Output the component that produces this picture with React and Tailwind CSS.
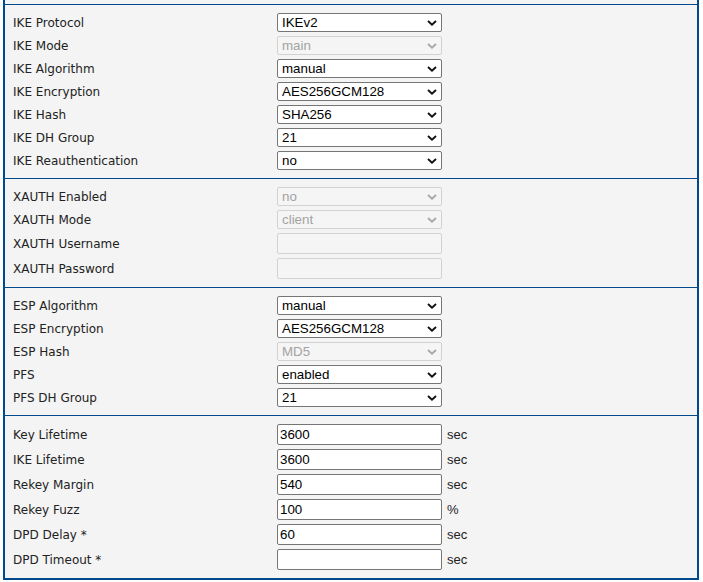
const sections = [
    [
        { label: 'IKE Protocol', type: 'select', value: 'IKEv2' },
        { label: 'IKE Mode', type: 'select', value: 'main', disabled: true },
        { label: 'IKE Algorithm', type: 'select', value: 'manual' },
        { label: 'IKE Encryption', type: 'select', value: 'AES256GCM128' },
        { label: 'IKE Hash', type: 'select', value: 'SHA256' },
        { label: 'IKE DH Group', type: 'select', value: '21' },
        { label: 'IKE Reauthentication', type: 'select', value: 'no' },
    ],
    [
        { label: 'XAUTH Enabled', type: 'select', value: 'no', disabled: true },
        { label: 'XAUTH Mode', type: 'select', value: 'client', disabled: true },
        { label: 'XAUTH Username', type: 'text', value: '', disabled: true },
        { label: 'XAUTH Password', type: 'text', value: '', disabled: true },
    ],
    [
        { label: 'ESP Algorithm', type: 'select', value: 'manual' },
        { label: 'ESP Encryption', type: 'select', value: 'AES256GCM128' },
        { label: 'ESP Hash', type: 'select', value: 'MD5', disabled: true },
        { label: 'PFS', type: 'select', value: 'enabled' },
        { label: 'PFS DH Group', type: 'select', value: '21' },
    ],
    [
        { label: 'Key Lifetime', type: 'text', value: '3600', unit: 'sec' },
        { label: 'IKE Lifetime', type: 'text', value: '3600', unit: 'sec' },
        { label: 'Rekey Margin', type: 'text', value: '540', unit: 'sec' },
        { label: 'Rekey Fuzz', type: 'text', value: '100', unit: '%' },
        { label: 'DPD Delay *', type: 'text', value: '60', unit: 'sec' },
        { label: 'DPD Timeout *', type: 'text', value: '', unit: 'sec' },
    ],
];

const ctrlFont = "font-['Liberation_Sans',Arial,sans-serif] text-[13.33px]";

function Chevron({ disabled }) {
    return (
        <svg
            width="10"
            height="6"
            viewBox="0 0 10 6"
            className="pointer-events-none absolute right-[5px] top-[7px]"
        >
            <path
                d="M1 1 L5 4.6 L9 1"
                fill="none"
                stroke={disabled ? '#a8a8a8' : '#111'}
                strokeWidth="1.9"
            />
        </svg>
    );
}

function Select({ value, disabled }) {
    return (
        <div className="relative h-[19px] w-[165px]">
            <select
                defaultValue={value}
                disabled={disabled}
                className={`block h-full w-full appearance-none rounded-[2px] border pl-[4px] leading-[17px] outline-none ${ctrlFont} ${
                    disabled
                        ? 'border-[#d2d2d2] bg-[#f5f5f5] text-[#a3a3a3]'
                        : 'border-[#767676] bg-white text-black'
                }`}
            >
                <option value={value}>{value}</option>
            </select>
            <Chevron disabled={disabled} />
        </div>
    );
}

function TextInput({ value, disabled }) {
    return (
        <input
            type="text"
            defaultValue={value}
            disabled={disabled}
            className={`block h-[21px] w-[165px] rounded-[2px] border px-[2px] outline-none ${ctrlFont} ${
                disabled
                    ? 'border-[#d2d2d2] bg-[#f5f5f5] text-[#a3a3a3]'
                    : 'border-[#767676] bg-white text-black'
            }`}
        />
    );
}

function Row({ row }) {
    const isSelect = row.type === 'select';
    return (
        <div className={`flex items-center ${isSelect ? 'h-[23px]' : 'h-[25px]'}`}>
            <div className="mt-[2px] w-[264px] text-[12px] leading-[15px] text-[#222] font-['DejaVu_Sans',Verdana,sans-serif]">
                {row.label}
            </div>
            {isSelect ? (
                <Select value={row.value} disabled={row.disabled} />
            ) : (
                <TextInput value={row.value} disabled={row.disabled} />
            )}
            {row.unit && (
                <span className="ml-[5px] text-[13px] leading-[15px] text-[#222] font-['Liberation_Sans',Arial,sans-serif]">
                    {row.unit}
                </span>
            )}
        </div>
    );
}

export default function App() {
    return (
        <div className="min-h-screen bg-white">
            <div className="ml-[3px] w-[696px] border-x-2 border-b-2 border-[#00498d] bg-[#f4f4f4] pt-[4px]">
                {sections.map((rows, i) => (
                    <div key={i} className="border-t border-[#00498d] py-[6px] pl-[8px]">
                        {rows.map((r) => (
                            <Row key={r.label} row={r} />
                        ))}
                    </div>
                ))}
            </div>
        </div>
    );
}
